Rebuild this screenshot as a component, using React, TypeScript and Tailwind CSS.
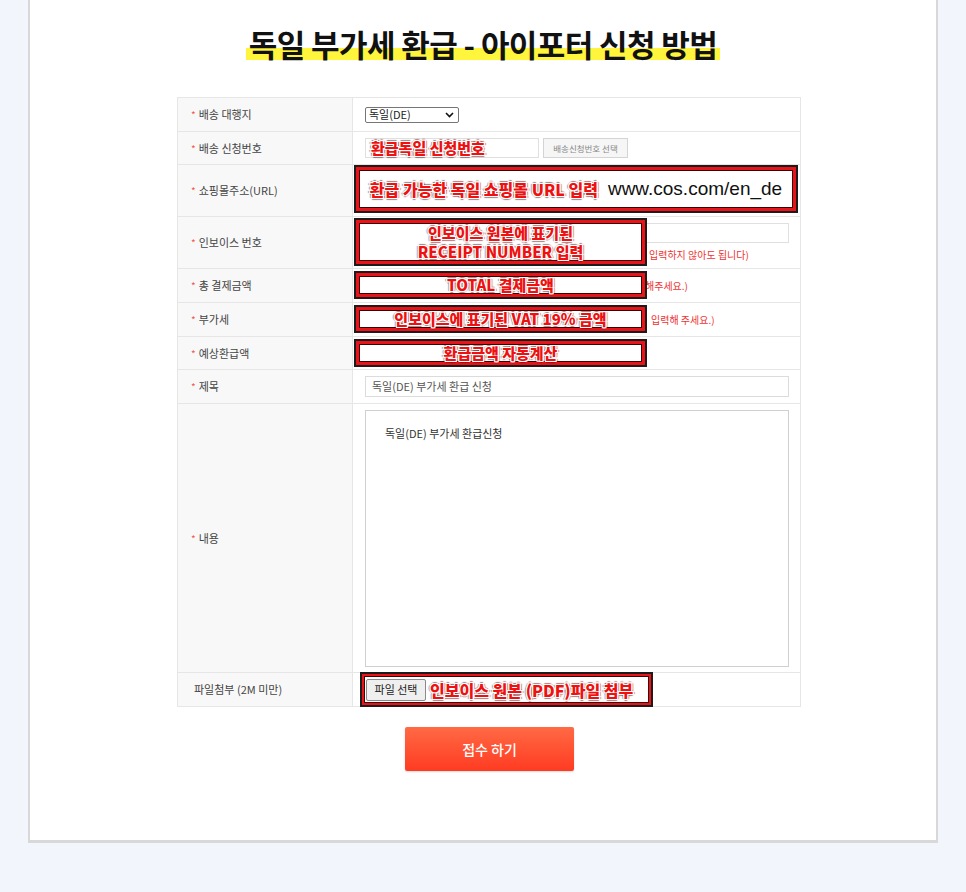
import React from "react";

const ann =
  "font-black text-[#ee1111] [text-shadow:-1px_-1px_0_#fff,1px_-1px_0_#fff,-1px_1px_0_#fff,1px_1px_0_#fff,0_-1px_0_#fff,0_1px_0_#fff,-1px_0_0_#fff,1px_0_0_#fff,-2px_0_1px_rgba(90,0,0,0.5),2px_0_1px_rgba(90,0,0,0.5),0_-2px_1px_rgba(90,0,0,0.5),0_2px_1px_rgba(90,0,0,0.5)]";

function Label({ text, star = true }: { text: string; star?: boolean }) {
  return (
    <div className="w-[175px] shrink-0 bg-[#f8f8f8] border-r border-[#e6e6e6] flex items-center pl-[13px] text-[11px] text-[#444]">
      {star ? <span className="text-[#f05a4a] mr-[3px] text-[10px]">*</span> : <span className="ml-[3px]" />}
      <span>{text}</span>
    </div>
  );
}

function AnnBox({ className, inner }: { className: string; inner: React.ReactNode }) {
  return (
    <div className={`absolute border-2 border-[#1c1c1c] bg-[#e8141a] p-[3px] ${className}`}>
      <div className="w-full h-full bg-white border border-[#3a0000] flex flex-col items-center justify-center">
        {inner}
      </div>
    </div>
  );
}

export default function App() {
  return (
    <div className="min-h-[892px] bg-[#f2f5fc] font-['Noto_Sans_CJK_KR',sans-serif]">
      <div className="ml-[28px] w-[910px] h-[843px] bg-white border-x-2 border-b-[3px] border-[#d8d8d8] flex flex-col">
        <div className="flex justify-center pt-[24px]">
          <h1 className="text-[31px] font-bold leading-[40px] text-[#111] tracking-[-0.6px] px-[3px] bg-[linear-gradient(to_bottom,transparent_60%,#fff53d_60%,#fff53d_90%,transparent_90%)]">
            독일 부가세 환급 - 아이포터 신청 방법
          </h1>
        </div>

        <div className="ml-[147px] w-[624px] mt-[33px] flex flex-col">
          <div className="border-t border-x border-[#e6e6e6] flex flex-col">
            {/* row1 */}
            <div className="flex h-[34px] border-b border-[#e6e6e6]">
              <Label text="배송 대행지" />
              <div className="flex items-center pl-[12px]">
                <div className="w-[94px] h-[16px] border border-[#767676] rounded-[2px] flex items-center justify-between pl-[3px] pr-[4px] text-[11px] text-[#222]">
                  <span>독일(DE)</span>
                  <svg width="9" height="6" viewBox="0 0 9 6"><path d="M1 1l3.5 3.5L8 1" stroke="#111" strokeWidth="1.6" fill="none" /></svg>
                </div>
              </div>
            </div>
            {/* row2 */}
            <div className="flex h-[33px] border-b border-[#e6e6e6]">
              <Label text="배송 신청번호" />
              <div className="flex items-center pl-[12px] gap-[4px]">
                <div className="w-[174px] h-[20px] border border-[#e0e0e0] flex items-center pl-[5px]">
                  <span className={`${ann} text-[15px] leading-[18px]`}>환급독일 신청번호</span>
                </div>
                <div className="w-[85px] h-[20px] border border-[#d4d4d4] bg-[#f6f6f6] flex items-center justify-center text-[8.5px] text-[#888]">
                  배송신청번호 선택
                </div>
              </div>
            </div>
            {/* row3 */}
            <div className="flex h-[52px] border-b border-[#e6e6e6]">
              <Label text="쇼핑몰주소(URL)" />
              <div className="relative flex-1">
                <AnnBox
                  className="left-[1px] top-[0px] w-[444px] h-[48px]"
                  inner={
                    <div className="flex items-center gap-[10px]">
                      <span className={`${ann} text-[16px] leading-[20px]`}>환급 가능한 독일 쇼핑몰 URL 입력</span>
                      <span className="font-['Liberation_Sans',sans-serif] text-[19px] leading-[22px] text-[#111]">www.cos.com/en_de</span>
                    </div>
                  }
                />
              </div>
            </div>
            {/* row4 */}
            <div className="flex h-[52px] border-b border-[#e6e6e6]">
              <Label text="인보이스 번호" />
              <div className="relative flex-1 flex flex-col pl-[12px] pt-[6px]">
                <div className="w-[424px] h-[20px] border border-[#e0e0e0]" />
                <div className="mt-[4px] pl-[284px] text-[10px] text-[#ee3333]">입력하지 않아도 됩니다)</div>
                <AnnBox
                  className="left-[1px] top-[1px] w-[293px] h-[48px]"
                  inner={
                    <>
                      <span className={`${ann} text-[15px] leading-[19px]`}>인보이스 원본에 표기된</span>
                      <span className={`${ann} text-[15px] leading-[19px]`}>RECEIPT NUMBER 입력</span>
                    </>
                  }
                />
              </div>
            </div>
            {/* row5 */}
            <div className="flex h-[34px] border-b border-[#e6e6e6]">
              <Label text="총 결제금액" />
              <div className="relative flex-1 flex items-center pl-[292px] text-[10px] text-[#ee3333]">
                해주세요.)
                <AnnBox className="left-[1px] top-[2px] w-[293px] h-[28px]" inner={<span className={`${ann} text-[15px] leading-[18px]`}>TOTAL 결제금액</span>} />
              </div>
            </div>
            {/* row6 */}
            <div className="flex h-[34px] border-b border-[#e6e6e6]">
              <Label text="부가세" />
              <div className="relative flex-1 flex items-center pl-[298px] text-[10px] text-[#ee3333]">
                입력해 주세요.)
                <AnnBox className="left-[1px] top-[2px] w-[293px] h-[28px]" inner={<span className={`${ann} text-[15px] leading-[18px]`}>인보이스에 표기된 VAT 19% 금액</span>} />
              </div>
            </div>
            {/* row7 */}
            <div className="flex h-[33px] border-b border-[#e6e6e6]">
              <Label text="예상환급액" />
              <div className="relative flex-1">
                <AnnBox className="left-[1px] top-[2px] w-[293px] h-[28px]" inner={<span className={`${ann} text-[15px] leading-[18px]`}>환급금액 자동계산</span>} />
              </div>
            </div>
            {/* row8 */}
            <div className="flex h-[34px] border-b border-[#e6e6e6]">
              <Label text="제목" />
              <div className="flex items-center pl-[12px]">
                <div className="w-[424px] h-[21px] border border-[#dcdcdc] flex items-center pl-[6px] text-[11px] text-[#555]">
                  독일(DE) 부가세 환급 신청
                </div>
              </div>
            </div>
            {/* row9 */}
            <div className="flex h-[269px] border-b border-[#e6e6e6]">
              <Label text="내용" />
              <div className="pl-[12px] pt-[6px]">
                <div className="w-[424px] h-[257px] border border-[#d0d0d0] pl-[19px] pt-[14px] text-[11px] text-[#333]">
                  독일(DE) 부가세 환급신청
                </div>
              </div>
            </div>
            {/* row10 */}
            <div className="flex h-[34px] border-b border-[#e6e6e6]">
              <Label text="파일첨부 (2M 미만)" star={false} />
              <div className="relative flex-1">
                <div className="absolute left-[7px] top-[-1px] w-[293px] h-[35px] border-2 border-[#1c1c1c] bg-[#e8141a] p-[2px]">
                  <div className="w-full h-full bg-white border border-[#3a0000] flex items-center pl-[1px] gap-[4px]">
                    <div className="w-[60px] h-[22px] bg-[#efefef] border border-[#8a8a8a] rounded-[2px] flex items-center justify-center text-[11px] text-[#222]">
                      파일 선택
                    </div>
                    <span className={`${ann} text-[16px] leading-[20px]`}>인보이스 원본 (PDF)파일 첨부</span>
                  </div>
                </div>
              </div>
            </div>
          </div>

          <div className="flex justify-center mt-[20px] pl-[1px]">
            <button className="w-[169px] h-[44px] rounded-[2px] bg-[linear-gradient(to_bottom,#ff6a44,#ff3b22)] shadow-[0_1px_2px_rgba(0,0,0,0.15)] text-white text-[14px] font-medium">
              접수 하기
            </button>
          </div>
        </div>
      </div>
    </div>
  );
}
